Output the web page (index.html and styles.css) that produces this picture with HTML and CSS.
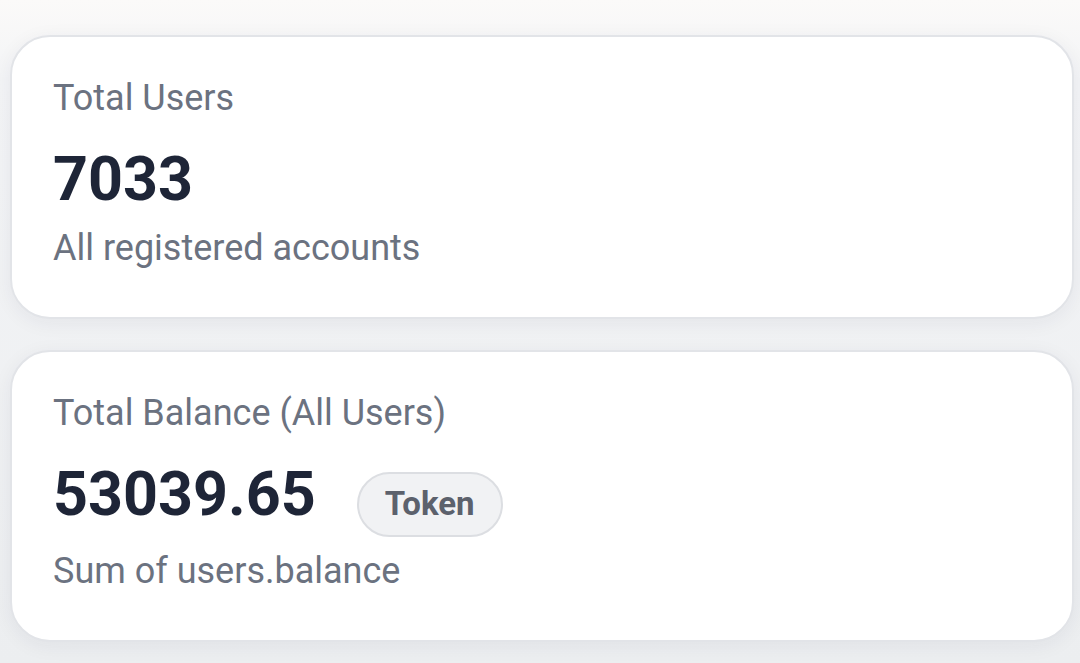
FILE: index.html
```html
<!DOCTYPE html>
<html lang="en">
  <head>
    <meta charset="utf-8">
    <title>Stats</title>
    <link rel="stylesheet" href="styles.css">
  </head>
  <body>
    <div class="stats">
      <div class="card">
        <div class="card-label">Total Users</div>
        <div class="card-row">
          <div class="card-value">7033</div>
        </div>
        <div class="card-note">All registered accounts</div>
      </div>
      <div class="card">
        <div class="card-label">Total Balance (All Users)</div>
        <div class="card-row">
          <div class="card-value">53039.65</div>
          <span class="badge">Token</span>
        </div>
        <div class="card-note">Sum of users.balance</div>
      </div>
    </div>
  </body>
</html>
```

FILE: styles.css
```css
html, body { margin: 0; height: 100%; }
body {
  font-family: Roboto, "Liberation Sans", sans-serif;
  background: linear-gradient(180deg, #fbfaf9 0%, #f3f4f6 12%, #eceef0 100%);
}
.stats { display: flex; flex-direction: column; gap: 31px; padding: 35px 6px 0 10px; }
.card {
  background: #fff;
  border: 2px solid #e2e4e8;
  border-radius: 40px;
  padding: 36px 41px 44px;
  box-shadow: 0 4px 20px rgba(30, 40, 60, 0.06);
}
.card-label { font-size: 36px; line-height: 50px; color: #6b7280; }
.card-row { display: flex; align-items: baseline; gap: 41px; margin-top: 21px; }
.card-value { font-size: 61px; font-weight: 700; line-height: 70px; color: #1e2537; }
.badge {
  font-size: 33px; font-weight: 700; color: #5c616c;
  background: #f1f2f4; border: 2px solid #dcdee2; border-radius: 40px;
  padding: 1px 26px 2px; line-height: 58px;
}
.card-note { font-size: 36px; line-height: 50px; margin-top: 9px; color: #6b7280; }
```
